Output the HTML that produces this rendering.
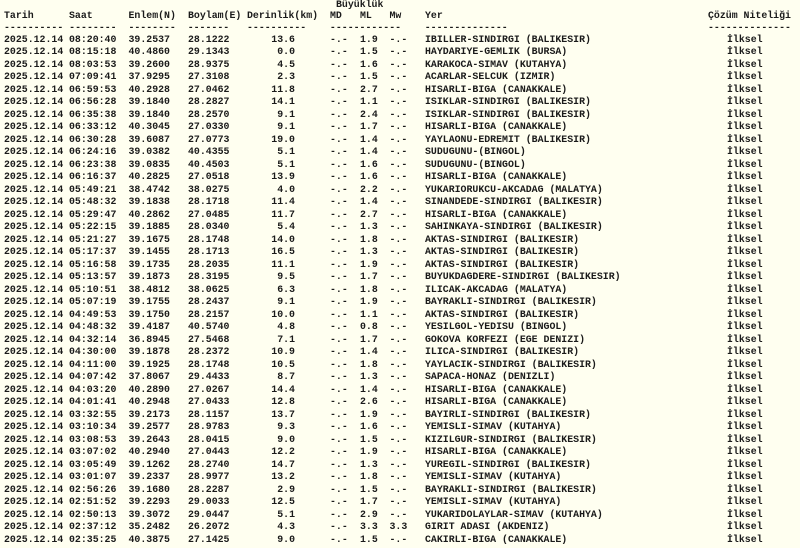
<!DOCTYPE html>
<html><head><meta charset="utf-8"><style>
html,body{margin:0;padding:0;background:#fffff0;width:800px;height:548px;overflow:hidden}
body{font-family:"Liberation Mono",monospace;font-size:9.9px;font-weight:bold;color:#1a1a1a;position:relative}
.r{position:absolute;left:0;width:800px;height:12.5px;line-height:12.5px;white-space:pre}
.r i{position:absolute;font-style:normal;top:0}
.r i:nth-child(1){left:4px}
.r i:nth-child(2){left:69px}
.r i:nth-child(3){left:128.5px}
.r i:nth-child(4){left:188px}
.r i:nth-child(5){right:505px;text-align:right}
.r i:nth-child(6){left:330px}
.r i:nth-child(7){left:360px}
.r i:nth-child(8){left:389.5px}
.r i:nth-child(9){left:425px}
.r i:nth-child(10){left:727px}
.h i{position:absolute;font-style:normal}
</style></head><body>
<div class="r h" style="top:-1.5px"><i style="left:336px">Büyüklük</i></div>
<div class="r h" style="top:10px"><i style="left:4px">Tarih</i><i style="left:69px">Saat</i><i style="left:128.5px">Enlem(N)</i><i style="left:188px">Boylam(E)</i><i style="left:247px">Derinlik(km)</i><i style="left:330px">MD</i><i style="left:360px">ML</i><i style="left:389.5px">Mw</i><i style="left:425px">Yer</i><i style="left:708px">Çözüm Niteliği</i></div>
<div class="r h" style="top:21.5px"><i style="left:4px">---------- --------  --------  -------   ----------    ------------    --------------</i><i style="left:708px">--------------</i></div>
<div id="rows" style="position:absolute;top:33.75px;left:0">
<div class="r" style="top:0px"><i>2025.12.14</i><i>08:20:40</i><i>39.2537</i><i>28.1222</i><i>13.6</i><i>-.-</i><i>1.9</i><i>-.-</i><i>IBILLER-SINDIRGI (BALIKESIR)</i><i>İlksel</i></div>
<div class="r" style="top:12.5px"><i>2025.12.14</i><i>08:15:18</i><i>40.4860</i><i>29.1343</i><i>0.0</i><i>-.-</i><i>1.5</i><i>-.-</i><i>HAYDARIYE-GEMLIK (BURSA)</i><i>İlksel</i></div>
<div class="r" style="top:25px"><i>2025.12.14</i><i>08:03:53</i><i>39.2600</i><i>28.9375</i><i>4.5</i><i>-.-</i><i>1.6</i><i>-.-</i><i>KARAKOCA-SIMAV (KUTAHYA)</i><i>İlksel</i></div>
<div class="r" style="top:37.5px"><i>2025.12.14</i><i>07:09:41</i><i>37.9295</i><i>27.3108</i><i>2.3</i><i>-.-</i><i>1.5</i><i>-.-</i><i>ACARLAR-SELCUK (IZMIR)</i><i>İlksel</i></div>
<div class="r" style="top:50px"><i>2025.12.14</i><i>06:59:53</i><i>40.2928</i><i>27.0462</i><i>11.8</i><i>-.-</i><i>2.7</i><i>-.-</i><i>HISARLI-BIGA (CANAKKALE)</i><i>İlksel</i></div>
<div class="r" style="top:62.5px"><i>2025.12.14</i><i>06:56:28</i><i>39.1840</i><i>28.2827</i><i>14.1</i><i>-.-</i><i>1.1</i><i>-.-</i><i>ISIKLAR-SINDIRGI (BALIKESIR)</i><i>İlksel</i></div>
<div class="r" style="top:75px"><i>2025.12.14</i><i>06:35:38</i><i>39.1840</i><i>28.2570</i><i>9.1</i><i>-.-</i><i>2.4</i><i>-.-</i><i>ISIKLAR-SINDIRGI (BALIKESIR)</i><i>İlksel</i></div>
<div class="r" style="top:87.5px"><i>2025.12.14</i><i>06:33:12</i><i>40.3045</i><i>27.0330</i><i>9.1</i><i>-.-</i><i>1.7</i><i>-.-</i><i>HISARLI-BIGA (CANAKKALE)</i><i>İlksel</i></div>
<div class="r" style="top:100px"><i>2025.12.14</i><i>06:30:28</i><i>39.6087</i><i>27.0773</i><i>19.0</i><i>-.-</i><i>1.4</i><i>-.-</i><i>YAYLAONU-EDREMIT (BALIKESIR)</i><i>İlksel</i></div>
<div class="r" style="top:112.5px"><i>2025.12.14</i><i>06:24:16</i><i>39.0382</i><i>40.4355</i><i>5.1</i><i>-.-</i><i>1.4</i><i>-.-</i><i>SUDUGUNU-(BINGOL)</i><i>İlksel</i></div>
<div class="r" style="top:125px"><i>2025.12.14</i><i>06:23:38</i><i>39.0835</i><i>40.4503</i><i>5.1</i><i>-.-</i><i>1.6</i><i>-.-</i><i>SUDUGUNU-(BINGOL)</i><i>İlksel</i></div>
<div class="r" style="top:137.5px"><i>2025.12.14</i><i>06:16:37</i><i>40.2825</i><i>27.0518</i><i>13.9</i><i>-.-</i><i>1.6</i><i>-.-</i><i>HISARLI-BIGA (CANAKKALE)</i><i>İlksel</i></div>
<div class="r" style="top:150px"><i>2025.12.14</i><i>05:49:21</i><i>38.4742</i><i>38.0275</i><i>4.0</i><i>-.-</i><i>2.2</i><i>-.-</i><i>YUKARIORUKCU-AKCADAG (MALATYA)</i><i>İlksel</i></div>
<div class="r" style="top:162.5px"><i>2025.12.14</i><i>05:48:32</i><i>39.1838</i><i>28.1718</i><i>11.4</i><i>-.-</i><i>1.4</i><i>-.-</i><i>SINANDEDE-SINDIRGI (BALIKESIR)</i><i>İlksel</i></div>
<div class="r" style="top:175px"><i>2025.12.14</i><i>05:29:47</i><i>40.2862</i><i>27.0485</i><i>11.7</i><i>-.-</i><i>2.7</i><i>-.-</i><i>HISARLI-BIGA (CANAKKALE)</i><i>İlksel</i></div>
<div class="r" style="top:187.5px"><i>2025.12.14</i><i>05:22:15</i><i>39.1885</i><i>28.0340</i><i>5.4</i><i>-.-</i><i>1.3</i><i>-.-</i><i>SAHINKAYA-SINDIRGI (BALIKESIR)</i><i>İlksel</i></div>
<div class="r" style="top:200px"><i>2025.12.14</i><i>05:21:27</i><i>39.1675</i><i>28.1748</i><i>14.0</i><i>-.-</i><i>1.8</i><i>-.-</i><i>AKTAS-SINDIRGI (BALIKESIR)</i><i>İlksel</i></div>
<div class="r" style="top:212.5px"><i>2025.12.14</i><i>05:17:37</i><i>39.1455</i><i>28.1713</i><i>16.5</i><i>-.-</i><i>1.3</i><i>-.-</i><i>AKTAS-SINDIRGI (BALIKESIR)</i><i>İlksel</i></div>
<div class="r" style="top:225px"><i>2025.12.14</i><i>05:16:58</i><i>39.1735</i><i>28.2035</i><i>11.1</i><i>-.-</i><i>1.9</i><i>-.-</i><i>AKTAS-SINDIRGI (BALIKESIR)</i><i>İlksel</i></div>
<div class="r" style="top:237.5px"><i>2025.12.14</i><i>05:13:57</i><i>39.1873</i><i>28.3195</i><i>9.5</i><i>-.-</i><i>1.7</i><i>-.-</i><i>BUYUKDAGDERE-SINDIRGI (BALIKESIR)</i><i>İlksel</i></div>
<div class="r" style="top:250px"><i>2025.12.14</i><i>05:10:51</i><i>38.4812</i><i>38.0625</i><i>6.3</i><i>-.-</i><i>1.8</i><i>-.-</i><i>ILICAK-AKCADAG (MALATYA)</i><i>İlksel</i></div>
<div class="r" style="top:262.5px"><i>2025.12.14</i><i>05:07:19</i><i>39.1755</i><i>28.2437</i><i>9.1</i><i>-.-</i><i>1.9</i><i>-.-</i><i>BAYRAKLI-SINDIRGI (BALIKESIR)</i><i>İlksel</i></div>
<div class="r" style="top:275px"><i>2025.12.14</i><i>04:49:53</i><i>39.1750</i><i>28.2157</i><i>10.0</i><i>-.-</i><i>1.1</i><i>-.-</i><i>AKTAS-SINDIRGI (BALIKESIR)</i><i>İlksel</i></div>
<div class="r" style="top:287.5px"><i>2025.12.14</i><i>04:48:32</i><i>39.4187</i><i>40.5740</i><i>4.8</i><i>-.-</i><i>0.8</i><i>-.-</i><i>YESILGOL-YEDISU (BINGOL)</i><i>İlksel</i></div>
<div class="r" style="top:300px"><i>2025.12.14</i><i>04:32:14</i><i>36.8945</i><i>27.5468</i><i>7.1</i><i>-.-</i><i>1.7</i><i>-.-</i><i>GOKOVA KORFEZI (EGE DENIZI)</i><i>İlksel</i></div>
<div class="r" style="top:312.5px"><i>2025.12.14</i><i>04:30:00</i><i>39.1878</i><i>28.2372</i><i>10.9</i><i>-.-</i><i>1.4</i><i>-.-</i><i>ILICA-SINDIRGI (BALIKESIR)</i><i>İlksel</i></div>
<div class="r" style="top:325px"><i>2025.12.14</i><i>04:11:00</i><i>39.1925</i><i>28.1748</i><i>10.5</i><i>-.-</i><i>1.8</i><i>-.-</i><i>YAYLACIK-SINDIRGI (BALIKESIR)</i><i>İlksel</i></div>
<div class="r" style="top:337.5px"><i>2025.12.14</i><i>04:07:42</i><i>37.8067</i><i>29.4433</i><i>8.7</i><i>-.-</i><i>1.3</i><i>-.-</i><i>SAPACA-HONAZ (DENIZLI)</i><i>İlksel</i></div>
<div class="r" style="top:350px"><i>2025.12.14</i><i>04:03:20</i><i>40.2890</i><i>27.0267</i><i>14.4</i><i>-.-</i><i>1.4</i><i>-.-</i><i>HISARLI-BIGA (CANAKKALE)</i><i>İlksel</i></div>
<div class="r" style="top:362.5px"><i>2025.12.14</i><i>04:01:41</i><i>40.2948</i><i>27.0433</i><i>12.8</i><i>-.-</i><i>2.6</i><i>-.-</i><i>HISARLI-BIGA (CANAKKALE)</i><i>İlksel</i></div>
<div class="r" style="top:375px"><i>2025.12.14</i><i>03:32:55</i><i>39.2173</i><i>28.1157</i><i>13.7</i><i>-.-</i><i>1.9</i><i>-.-</i><i>BAYIRLI-SINDIRGI (BALIKESIR)</i><i>İlksel</i></div>
<div class="r" style="top:387.5px"><i>2025.12.14</i><i>03:10:34</i><i>39.2577</i><i>28.9783</i><i>9.3</i><i>-.-</i><i>1.6</i><i>-.-</i><i>YEMISLI-SIMAV (KUTAHYA)</i><i>İlksel</i></div>
<div class="r" style="top:400px"><i>2025.12.14</i><i>03:08:53</i><i>39.2643</i><i>28.0415</i><i>9.0</i><i>-.-</i><i>1.5</i><i>-.-</i><i>KIZILGUR-SINDIRGI (BALIKESIR)</i><i>İlksel</i></div>
<div class="r" style="top:412.5px"><i>2025.12.14</i><i>03:07:02</i><i>40.2940</i><i>27.0443</i><i>12.2</i><i>-.-</i><i>1.9</i><i>-.-</i><i>HISARLI-BIGA (CANAKKALE)</i><i>İlksel</i></div>
<div class="r" style="top:425px"><i>2025.12.14</i><i>03:05:49</i><i>39.1262</i><i>28.2740</i><i>14.7</i><i>-.-</i><i>1.3</i><i>-.-</i><i>YUREGIL-SINDIRGI (BALIKESIR)</i><i>İlksel</i></div>
<div class="r" style="top:437.5px"><i>2025.12.14</i><i>03:01:07</i><i>39.2337</i><i>28.9977</i><i>13.2</i><i>-.-</i><i>1.8</i><i>-.-</i><i>YEMISLI-SIMAV (KUTAHYA)</i><i>İlksel</i></div>
<div class="r" style="top:450px"><i>2025.12.14</i><i>02:56:26</i><i>39.1680</i><i>28.2287</i><i>2.9</i><i>-.-</i><i>1.5</i><i>-.-</i><i>BAYRAKLI-SINDIRGI (BALIKESIR)</i><i>İlksel</i></div>
<div class="r" style="top:462.5px"><i>2025.12.14</i><i>02:51:52</i><i>39.2293</i><i>29.0033</i><i>12.5</i><i>-.-</i><i>1.7</i><i>-.-</i><i>YEMISLI-SIMAV (KUTAHYA)</i><i>İlksel</i></div>
<div class="r" style="top:475px"><i>2025.12.14</i><i>02:50:13</i><i>39.3072</i><i>29.0447</i><i>5.1</i><i>-.-</i><i>2.9</i><i>-.-</i><i>YUKARIDOLAYLAR-SIMAV (KUTAHYA)</i><i>İlksel</i></div>
<div class="r" style="top:487.5px"><i>2025.12.14</i><i>02:37:12</i><i>35.2482</i><i>26.2072</i><i>4.3</i><i>-.-</i><i>3.3</i><i>3.3</i><i>GIRIT ADASI (AKDENIZ)</i><i>İlksel</i></div>
<div class="r" style="top:500px"><i>2025.12.14</i><i>02:35:25</i><i>40.3875</i><i>27.1425</i><i>9.0</i><i>-.-</i><i>1.5</i><i>-.-</i><i>CAKIRLI-BIGA (CANAKKALE)</i><i>İlksel</i></div>
</div>
</body></html>
